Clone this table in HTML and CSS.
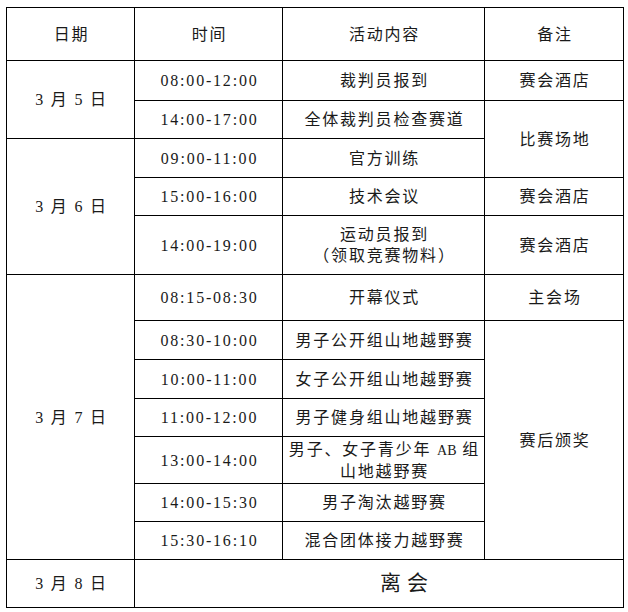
FILE: index.html
```html
<!DOCTYPE html>
<html lang="zh-CN">
<head>
<meta charset="utf-8">
<title>赛程安排</title>
<link rel="stylesheet" href="styles.css">
</head>
<body>
<table class="schedule">
  <colgroup>
    <col class="c-date">
    <col class="c-time">
    <col class="c-act">
    <col class="c-note">
  </colgroup>
  <tr class="h53"><td>日期</td><td>时间</td><td>活动内容</td><td>备注</td></tr>
  <tr class="h40"><td rowspan="2">3 月 5 日</td><td>08:00-12:00</td><td>裁判员报到</td><td>赛会酒店</td></tr>
  <tr class="h38"><td>14:00-17:00</td><td>全体裁判员检查赛道</td><td rowspan="2">比赛场地</td></tr>
  <tr class="h39"><td rowspan="3">3 月 6 日</td><td>09:00-11:00</td><td>官方训练</td></tr>
  <tr class="h38"><td>15:00-16:00</td><td>技术会议</td><td>赛会酒店</td></tr>
  <tr class="h59"><td>14:00-19:00</td><td>运动员报到<br>（领取竞赛物料）</td><td>赛会酒店</td></tr>
  <tr class="h46"><td rowspan="7">3 月 7 日</td><td>08:15-08:30</td><td>开幕仪式</td><td>主会场</td></tr>
  <tr class="h39"><td>08:30-10:00</td><td>男子公开组山地越野赛</td><td rowspan="6">赛后颁奖</td></tr>
  <tr class="h39"><td>10:00-11:00</td><td>女子公开组山地越野赛</td></tr>
  <tr class="h38"><td>11:00-12:00</td><td>男子健身组山地越野赛</td></tr>
  <tr class="h47"><td>13:00-14:00</td><td>男子、女子青少年 <span class="ab">AB</span> 组<br>山地越野赛</td></tr>
  <tr class="h38"><td>14:00-15:30</td><td>男子淘汰越野赛</td></tr>
  <tr class="h38"><td>15:30-16:10</td><td>混合团体接力越野赛</td></tr>
  <tr class="h48"><td>3 月 8 日</td><td colspan="3" class="leave">离会</td></tr>
</table>
</body>
</html>
```

FILE: styles.css
```css
html, body {
  margin: 0;
  padding: 0;
  background: #ffffff;
}

body {
  padding: 7px 0 0 6px;
}

.schedule {
  border-collapse: collapse;
  table-layout: fixed;
  width: 617px;
  font-family: "Liberation Serif", "Noto Sans CJK SC", serif;
  font-size: 16px;
  color: #1a1a1a;
}

.c-date { width: 128px; }
.c-time { width: 148px; }
.c-act { width: 202px; }
.c-note { width: 139px; }

.schedule td {
  border: 1px solid #000;
  text-align: center;
  vertical-align: middle;
  padding: 0 0 0 2px;
  letter-spacing: 1.8px;
  line-height: 21px;
  white-space: nowrap;
}

.ab {
  letter-spacing: 0;
  font-size: 14px;
}

.schedule td.leave {
  font-size: 21px;
  letter-spacing: 6px;
  padding-left: 56px;
}

.h53 { height: 53px; }
.h40 { height: 40px; }
.h38 { height: 38px; }
.h39 { height: 39px; }
.h59 { height: 59px; }
.h46 { height: 46px; }
.h47 { height: 47px; }
.h48 { height: 48px; }
```
